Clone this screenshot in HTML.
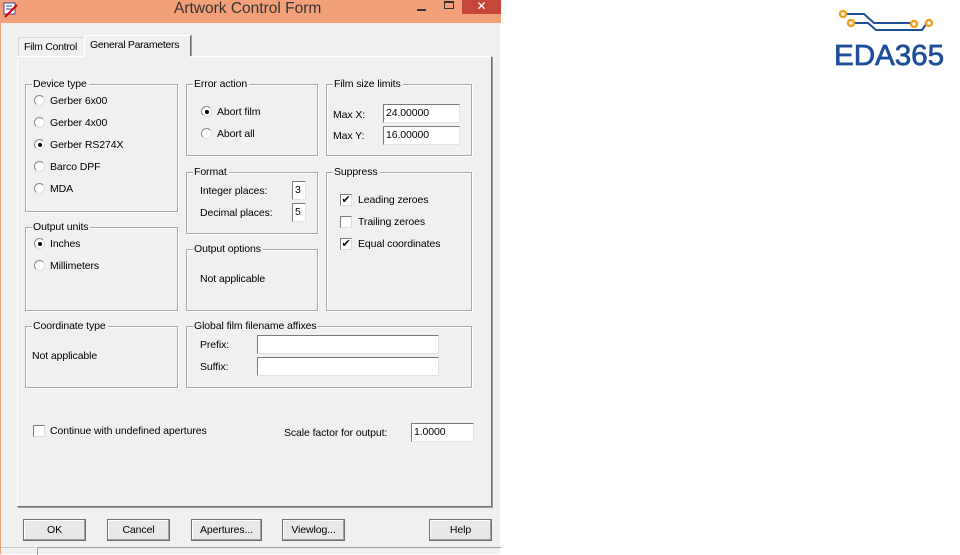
<!DOCTYPE html>
<html><head><style>
*{margin:0;padding:0;box-sizing:border-box}
body{width:960px;height:554px;background:#fff;position:relative;overflow:hidden;font-family:"Liberation Sans",sans-serif;font-size:10.5px;color:#000;letter-spacing:-0.1px}
.a{position:absolute;white-space:nowrap;line-height:13px}
#win{position:absolute;left:0;top:0;width:500px;height:554px;background:#f0f0f0;border-left:1px solid #f0a07a}
#tb{position:absolute;left:0;top:0;width:500px;height:23px;background:#f2a07a}
.g{position:absolute;border:1px solid #a8a8a8;box-shadow:inset 1px 1px 0 #fff,1px 1px 0 #fff}
.gl{position:absolute;top:-7px;left:6px;background:#f0f0f0;padding:0 2px 0 1px;line-height:13px}
.r{position:absolute;width:11px;height:11px;border-radius:50%;background:#fff;border:1px solid #8a8a8a;border-right-color:#ddd;border-bottom-color:#ddd}
.r.on::after{content:"";position:absolute;left:3px;top:3px;width:4px;height:4px;border-radius:50%;background:#000}
.c{position:absolute;width:12px;height:12px;background:#fff;border:1px solid #7a7a7a;border-right-color:#ddd;border-bottom-color:#ddd}
.in{position:absolute;background:#fff;border:1px solid #7a7a7a;border-right-color:#e3e3e3;border-bottom-color:#e3e3e3;padding-left:2px;line-height:17px}
.b{position:absolute;top:519px;height:22px;background:#e8e8e8;border:1px solid #707070;box-shadow:inset -1px -1px 0 #a0a0a0,inset 1px 1px 0 #fff;text-align:center;line-height:20px}
</style></head><body>
<div id="win">
<div id="tb">
<svg class="a" style="left:2px;top:2px" width="16" height="16"><rect x="1" y="1" width="11" height="11" fill="#fff" stroke="#448"/><path d="M3 4h6M3 7h6" stroke="#448"/><path d="M2 15L14 3" stroke="#d00" stroke-width="2"/></svg>
<div class="a" style="left:173px;top:0px;font-size:15.5px;color:#333;line-height:18px;letter-spacing:0">Artwork Control Form</div>
<div class="a" style="left:416px;top:9px;width:9px;height:2px;background:#333"></div>
<div class="a" style="left:443px;top:1px;width:10px;height:8px;border:1px solid #333;border-top-width:2px"></div>
<div class="a" style="left:461px;top:0;width:39px;height:14px;background:#c7463c;color:#fff;text-align:center;font-size:12px;line-height:13px">✕</div>
</div>
<!-- tabs -->
<div class="a" style="left:17px;top:37px;width:67px;height:20px;border:1px solid #d8d8d8;border-bottom:none;background:#f0f0f0;padding:3px 0 0 5px;letter-spacing:-0.3px">Film Control</div>
<div class="a" style="left:83px;top:35px;width:107px;height:22px;border:1px solid #fff;border-right:1px solid #707070;border-bottom:none;background:#f0f0f0;padding:3px 0 0 5px;box-shadow:1px 0 0 #a0a0a0;letter-spacing:-0.3px">General Parameters</div>
<div class="a" style="left:16px;top:56px;width:475px;height:451px;border:1px solid #fff;border-right-color:#707070;border-bottom-color:#707070;box-shadow:1px 1px 0 #a0a0a0"></div>
<div class="a" style="left:84px;top:56px;width:105px;height:2px;background:#f0f0f0"></div>

<div class="g" style="left:24px;top:84px;width:153px;height:128px"><span class="gl">Device type</span></div>
<div class="r" style="left:33px;top:95px"></div><div class="a" style="left:49px;top:95px">Gerber 6x00</div>
<div class="r" style="left:33px;top:117px"></div><div class="a" style="left:49px;top:117px">Gerber 4x00</div>
<div class="r on" style="left:33px;top:139px"></div><div class="a" style="left:49px;top:139px">Gerber RS274X</div>
<div class="r" style="left:33px;top:161px"></div><div class="a" style="left:49px;top:161px">Barco DPF</div>
<div class="r" style="left:33px;top:183px"></div><div class="a" style="left:49px;top:183px">MDA</div>

<div class="g" style="left:185px;top:84px;width:132px;height:72px"><span class="gl">Error action</span></div>
<div class="r on" style="left:200px;top:106px"></div><div class="a" style="left:216px;top:106px">Abort film</div>
<div class="r" style="left:200px;top:128px"></div><div class="a" style="left:216px;top:128px">Abort all</div>

<div class="g" style="left:325px;top:84px;width:146px;height:72px"><span class="gl">Film size limits</span></div>
<div class="a" style="left:332px;top:109px">Max X:</div><div class="in" style="left:382px;top:104px;width:77px;height:19px">24.00000</div>
<div class="a" style="left:332px;top:130px">Max Y:</div><div class="in" style="left:382px;top:126px;width:77px;height:19px">16.00000</div>

<div class="g" style="left:185px;top:172px;width:132px;height:62px"><span class="gl">Format</span></div>
<div class="a" style="left:199px;top:185px">Integer places:</div><div class="in" style="left:291px;top:181px;width:14px;height:19px">3</div>
<div class="a" style="left:199px;top:207px">Decimal places:</div><div class="in" style="left:291px;top:203px;width:14px;height:19px">5</div>

<div class="g" style="left:325px;top:172px;width:146px;height:139px"><span class="gl">Suppress</span></div>
<div class="c" style="left:339px;top:194px;font-size:11px;line-height:10px;text-align:center">✔</div><div class="a" style="left:357px;top:194px">Leading zeroes</div>
<div class="c" style="left:339px;top:216px"></div><div class="a" style="left:357px;top:216px">Trailing zeroes</div>
<div class="c" style="left:339px;top:238px;font-size:11px;line-height:10px;text-align:center">✔</div><div class="a" style="left:357px;top:238px">Equal coordinates</div>

<div class="g" style="left:24px;top:227px;width:153px;height:84px"><span class="gl">Output units</span></div>
<div class="r on" style="left:33px;top:238px"></div><div class="a" style="left:49px;top:238px">Inches</div>
<div class="r" style="left:33px;top:260px"></div><div class="a" style="left:49px;top:260px">Millimeters</div>

<div class="g" style="left:185px;top:249px;width:132px;height:62px"><span class="gl">Output options</span></div>
<div class="a" style="left:199px;top:273px">Not applicable</div>

<div class="g" style="left:24px;top:326px;width:153px;height:62px"><span class="gl">Coordinate type</span></div>
<div class="a" style="left:31px;top:350px">Not applicable</div>

<div class="g" style="left:185px;top:326px;width:286px;height:62px"><span class="gl">Global film filename affixes</span></div>
<div class="a" style="left:199px;top:339px">Prefix:</div><div class="in" style="left:256px;top:335px;width:182px;height:19px"></div>
<div class="a" style="left:199px;top:361px">Suffix:</div><div class="in" style="left:256px;top:357px;width:182px;height:19px"></div>

<div class="c" style="left:32px;top:425px"></div><div class="a" style="left:49px;top:425px">Continue with undefined apertures</div>
<div class="a" style="left:283px;top:427px">Scale factor for output:</div><div class="in" style="left:410px;top:423px;width:63px;height:19px">1.0000</div>

<div class="b" style="left:22px;width:63px">OK</div>
<div class="b" style="left:106px;width:63px">Cancel</div>
<div class="b" style="left:190px;width:71px">Apertures...</div>
<div class="b" style="left:281px;width:63px">Viewlog...</div>
<div class="b" style="left:428px;width:63px">Help</div>

<div class="a" style="left:36px;top:547px;width:464px;height:8px;border-top:1px solid #a0a0a0;border-left:1px solid #a0a0a0"></div>
<div class="a" style="left:0;top:547px;width:34px;height:1px;background:#c8c8c8"></div>
</div>

<svg class="a" style="left:834px;top:8px" width="120" height="62">
<g fill="none" stroke="#1d4e9a" stroke-width="2"><path d="M10 6H30L40 15H80"/><path d="M18 15H34L42 22H88L93 15"/></g>
<g fill="#fff" stroke="#f0a020" stroke-width="2.5"><circle cx="9" cy="6" r="3"/><circle cx="17" cy="15" r="3"/><circle cx="80" cy="16" r="3"/><circle cx="95" cy="15" r="3"/></g>
<text x="0" y="57" font-family="Liberation Sans,sans-serif" font-size="29" fill="#1d4e9a" stroke="#1d4e9a" stroke-width="0.7" textLength="110" lengthAdjust="spacingAndGlyphs">EDA365</text>
</svg>
</body></html>
